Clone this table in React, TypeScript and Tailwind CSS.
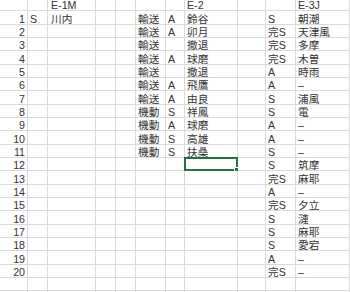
import React from "react";

const rows: string[][] = [
  ["", "", "E-1M", "", "", "", "", "E-2", "", "", "E-3J"],
  ["1", "S", "川内", "", "", "輸送", "A", "鈴谷", "", "S", "朝潮"],
  ["2", "", "", "", "", "輸送", "A", "卯月", "", "完S", "天津風"],
  ["3", "", "", "", "", "輸送", "", "撤退", "", "完S", "多摩"],
  ["4", "", "", "", "", "輸送", "A", "球磨", "", "完S", "木曽"],
  ["5", "", "", "", "", "輸送", "", "撤退", "", "A", "時雨"],
  ["6", "", "", "", "", "輸送", "A", "飛鷹", "", "A", "–"],
  ["7", "", "", "", "", "輸送", "A", "由良", "", "S", "浦風"],
  ["8", "", "", "", "", "機動", "S", "祥鳳", "", "S", "電"],
  ["9", "", "", "", "", "機動", "A", "球磨", "", "A", "–"],
  ["10", "", "", "", "", "機動", "S", "高雄", "", "A", "–"],
  ["11", "", "", "", "", "機動", "S", "扶桑", "", "S", "–"],
  ["12", "", "", "", "", "", "", "", "", "S", "筑摩"],
  ["13", "", "", "", "", "", "", "", "", "完S", "麻耶"],
  ["14", "", "", "", "", "", "", "", "", "A", "–"],
  ["15", "", "", "", "", "", "", "", "", "完S", "夕立"],
  ["16", "", "", "", "", "", "", "", "", "S", "漣"],
  ["17", "", "", "", "", "", "", "", "", "S", "麻耶"],
  ["18", "", "", "", "", "", "", "", "", "S", "愛宕"],
  ["19", "", "", "", "", "", "", "", "", "A", "–"],
  ["20", "", "", "", "", "", "", "", "", "完S", "–"],
  ["", "", "", "", "", "", "", "", "", "", ""],
  ["", "", "", "", "", "", "", "", "", "", ""],
];

export default function App() {
  return (
    <div className="w-[350px] h-[292px] overflow-hidden bg-white font-['Liberation_Sans','Noto_Sans_CJK_JP',sans-serif] text-[10.67px] text-[#333]">
      <div className="grid grid-cols-[28px_20px_48px_20px_20px_30px_19px_53px_28px_30px_54px] grid-rows-[11.33px_repeat(22,13.333px)]">
        {rows.map((r, ri) =>
          r.map((c, ci) => {
            const isSel = ri === 12 && ci === 7;
            return (
              <div
                key={`${ri}-${ci}`}
                className={
                  ci === 0
                    ? "relative flex items-end justify-end whitespace-nowrap border-b border-r border-[#dadada] pr-[2px] leading-[10px]"
                    : ci === 2
                    ? "relative flex items-end whitespace-nowrap border-b border-r border-[#dadada] pl-[3px] leading-[10px]"
                    : "relative flex items-end whitespace-nowrap border-b border-r border-[#dadada] pl-[2px] leading-[10px]"
                }
              >
                {c}
                {isSel && (
                  <div className="absolute -left-px -top-px -right-px -bottom-px border-2 border-[#217346]">
                    <div className="absolute -right-[3px] -bottom-[3px] h-[5px] w-[5px] border border-white bg-[#217346]" />
                  </div>
                )}
              </div>
            );
          })
        )}
      </div>
    </div>
  );
}
